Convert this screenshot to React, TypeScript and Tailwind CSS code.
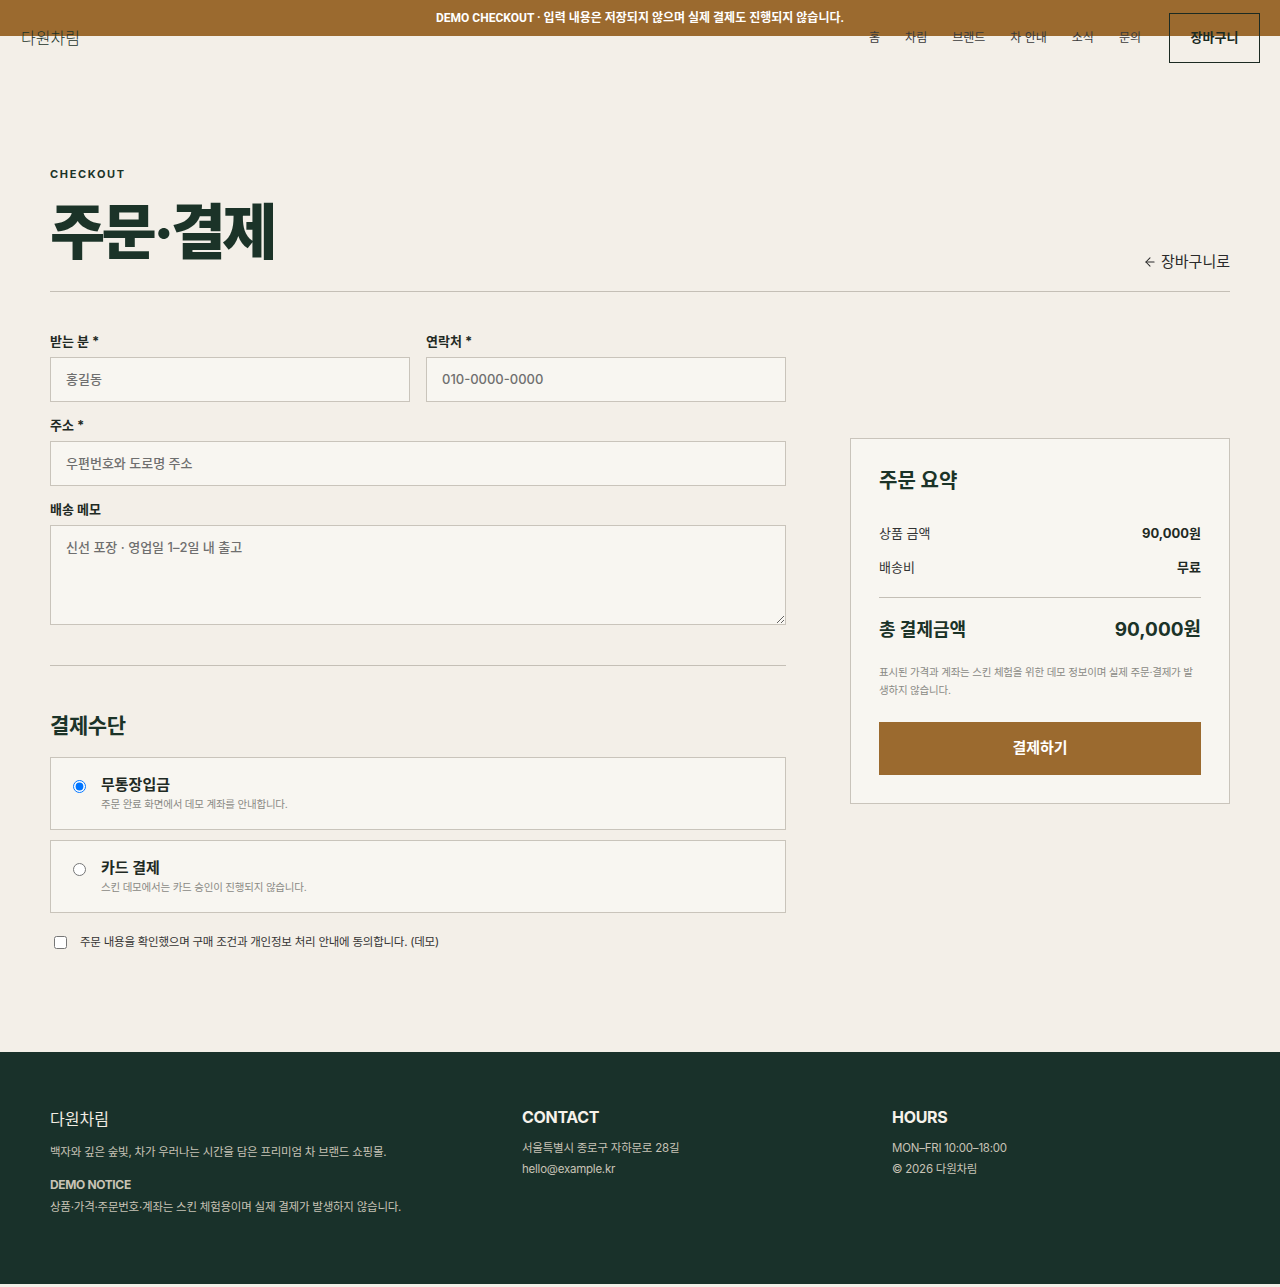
import { ArrowLeft } from "lucide-react";

const navItems = ["홈", "차림", "브랜드", "차 안내", "소식", "문의"];

const Field = ({
  label,
  placeholder,
  required,
}: {
  label: string;
  placeholder: string;
  required?: boolean;
}) => (
  <label className="flex flex-col gap-[8px]">
    <span className="text-[13px] font-bold text-[#1f2a24] leading-[16px]">
      {label}
      {required && " *"}
    </span>
    <input
      placeholder={placeholder}
      className="h-[45px] w-full border border-[#c9c4bb] bg-[#f8f6f1] px-[15px] text-[13px] font-medium text-[#222] placeholder:text-[#6f6f6f] outline-none"
    />
  </label>
);

const PayOption = ({
  title,
  desc,
  checked,
}: {
  title: string;
  desc: string;
  checked?: boolean;
}) => (
  <label className="flex h-[73px] items-start gap-[15px] border border-[#c9c4bb] bg-[#f8f6f1] px-[22px] pt-[18px]">
    <input
      type="radio"
      name="pay"
      defaultChecked={checked}
      className="mt-[4px] h-[13px] w-[13px]"
    />
    <div className="flex flex-col">
      <span className="text-[15px] font-bold leading-[18px] text-[#1f2a24]">{title}</span>
      <span className="mt-[4px] text-[10.5px] leading-[14px] tracking-[-0.02em] text-[#8a8a85]">{desc}</span>
    </div>
  </label>
);

export default function App() {
  return (
    <div className="min-h-[1287px] bg-[#f3efe8] font-['Inter','Noto_Sans_CJK_KR',sans-serif] text-[#1b3328]">
      <div className="relative">
        {/* demo banner */}
        <div className="flex h-9 items-center justify-center bg-[#9b6a2f] font-['Roboto','Noto_Sans_CJK_KR',sans-serif] text-[12px] font-bold text-white">
          DEMO CHECKOUT · 입력 내용은 저장되지 않으며 실제 결제도 진행되지 않습니다.
        </div>

        {/* header */}
        <header className="absolute inset-x-0 top-0 z-10 flex h-[76px] items-center justify-between pl-[21px] pr-[20px]">
          <span className="text-[16px] font-light text-[#1b3328]">다원차림</span>
          <nav className="flex items-center">
            <div className="flex items-center gap-[25px] text-[12px] text-[#3a3a3a]">
              {navItems.map((n) => (
                <a key={n} href="#">
                  {n}
                </a>
              ))}
            </div>
            <button className="ml-[28px] h-[50px] w-[91px] border border-[#1b2a22] text-[13px] font-bold text-[#1b2a22]">
              장바구니
            </button>
          </nav>
        </header>
      </div>

      <main className="mx-auto w-[1180px] pt-[130px] pb-[101px]">
        <div className="flex items-end justify-between border-b border-[#c4bfb6] pb-[24px]">
          <div>
            <p className="text-[11px] font-bold tracking-[0.15em] text-[#1b3328]">CHECKOUT</p>
            <h1 className="mt-[14px] text-[60px] font-extrabold leading-[70px] tracking-[-0.06em] text-[#1b3328]">
              주문·결제
            </h1>
          </div>
          <a href="#" className="mb-[-7px] flex items-center gap-[4px] text-[15px] text-[#2a2a2a]">
            <ArrowLeft size={14} strokeWidth={1.8} />
            장바구니로
          </a>
        </div>

        <div className="mt-[41px] grid grid-cols-[736px_380px] gap-[64px]">
          {/* form */}
          <div className="flex flex-col">
            <div className="grid grid-cols-2 gap-[16px]">
              <Field label="받는 분" placeholder="홍길동" required />
              <Field label="연락처" placeholder="010-0000-0000" required />
            </div>
            <div className="mt-[15px]">
              <Field label="주소" placeholder="우편번호와 도로명 주소" required />
            </div>
            <label className="mt-[15px] flex flex-col gap-[8px]">
              <span className="text-[13px] font-bold leading-[16px] text-[#1f2a24]">배송 메모</span>
              <textarea
                placeholder="신선 포장 · 영업일 1–2일 내 출고"
                className="h-[100px] w-full border border-[#c9c4bb] bg-[#f8f6f1] px-[15px] py-[12px] text-[13px] font-medium placeholder:text-[#6f6f6f] outline-none"
              />
            </label>

            <div className="mt-[40px] border-t border-[#c4bfb6]" />

            <h2 className="mt-[46px] text-[21px] font-bold leading-[28px] tracking-[-0.02em] text-[#1b3328]">결제수단</h2>
            <div className="mt-[17px] flex flex-col gap-[10px]">
              <PayOption title="무통장입금" desc="주문 완료 화면에서 데모 계좌를 안내합니다." checked />
              <PayOption title="카드 결제" desc="스킨 데모에서는 카드 승인이 진행되지 않습니다." />
            </div>
            <label className="mt-[21px] flex items-center gap-[13px] pl-[4px] text-[11.5px] tracking-[-0.02em] text-[#333]">
              <input type="checkbox" className="h-[13px] w-[13px]" />
              주문 내용을 확인했으며 구매 조건과 개인정보 처리 안내에 동의합니다. (데모)
            </label>
          </div>

          {/* summary */}
          <aside className="mt-[105px] self-start border border-[#c9c4bb] bg-[#f8f6f1] px-[28px] pt-[28px] pb-[28px]">
            <h3 className="text-[20px] font-bold leading-[28px] text-[#1b3328]">주문 요약</h3>
            <div className="mt-[29px] flex flex-col gap-[16px] text-[13px]">
              <div className="flex justify-between leading-[18px]">
                <span className="text-[#333]">상품 금액</span>
                <span className="font-bold text-[#1f2a24]">90,000원</span>
              </div>
              <div className="flex justify-between leading-[18px]">
                <span className="text-[#333]">배송비</span>
                <span className="font-bold text-[#1f2a24]">무료</span>
              </div>
            </div>
            <div className="mt-[21px] border-t border-[#c4bfb6]" />
            <div className="mt-[18px] flex items-center justify-between">
              <span className="text-[18px] font-bold text-[#1b3328]">총 결제금액</span>
              <span className="text-[19px] font-bold text-[#1b3328]">90,000원</span>
            </div>
            <p className="mt-[20px] text-[10.5px] leading-[18px] tracking-[-0.02em] text-[#8a8a85]">
              표시된 가격과 계좌는 스킨 체험을 위한 데모 정보이며 실제 주문·결제가 발생하지 않습니다.
            </p>
            <button className="mt-[22px] h-[53px] w-full bg-[#9b6a2f] text-[15px] font-bold text-white">
              결제하기
            </button>
          </aside>
        </div>
      </main>

      <footer className="bg-[#19312a] pt-[55px] pb-[68px]">
        <div className="mx-auto grid w-[1180px] grid-cols-[422px_320px_1fr] gap-[50px]">
          <div>
            <p className="text-[16px] leading-[24px] text-[#f1ece2]">다원차림</p>
            <p className="mt-[12px] text-[11.5px] leading-[18px] tracking-[-0.02em] text-[#c8c3b6]">
              백자와 깊은 숲빛, 차가 우러나는 시간을 담은 프리미엄 차 브랜드 쇼핑몰.
            </p>
            <p className="mt-[15px] text-[12px] font-bold leading-[18px] tracking-[-0.03em] text-[#c8c3b6]">DEMO NOTICE</p>
            <p className="mt-[4px] text-[11.5px] leading-[18px] tracking-[-0.02em] text-[#c8c3b6]">
              상품·가격·주문번호·계좌는 스킨 체험용이며 실제 결제가 발생하지 않습니다.
            </p>
          </div>
          <div>
            <p className="text-[16px] font-bold leading-[20px] tracking-[-0.02em] text-[#f6f2ea]">CONTACT</p>
            <p className="mt-[11px] text-[11.5px] leading-[21px] tracking-[-0.02em] text-[#c8c3b6]">서울특별시 종로구 자하문로 28길</p>
            <p className="text-[11.5px] leading-[21px] tracking-[-0.02em] text-[#c8c3b6]">hello@example.kr</p>
          </div>
          <div>
            <p className="text-[16px] font-bold leading-[20px] tracking-[-0.02em] text-[#f6f2ea]">HOURS</p>
            <p className="mt-[11px] text-[11.5px] leading-[21px] tracking-[-0.02em] text-[#c8c3b6]">MON–FRI 10:00–18:00</p>
            <p className="text-[11.5px] leading-[21px] tracking-[-0.02em] text-[#c8c3b6]">© 2026 다원차림</p>
          </div>
        </div>
      </footer>
    </div>
  );
}
